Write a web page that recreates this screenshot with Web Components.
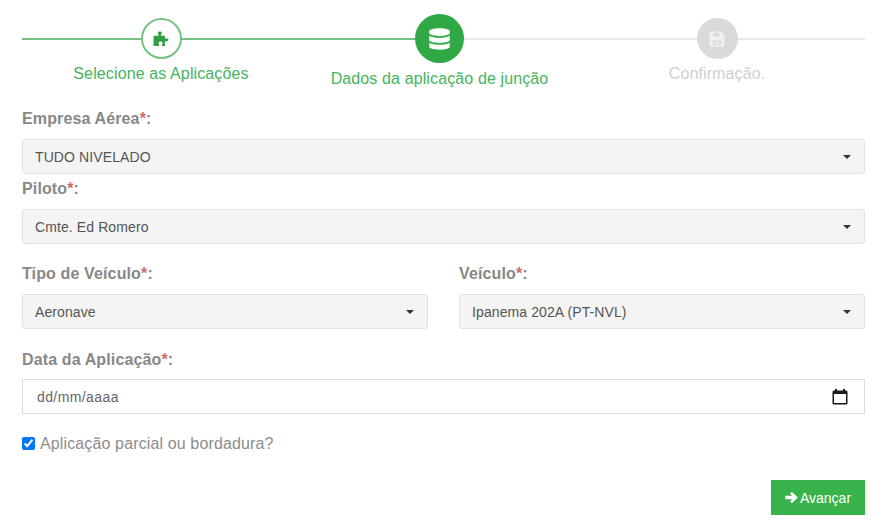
<!DOCTYPE html>
<html lang="pt">
<head>
<meta charset="utf-8">
<title>Aplicação</title>
<style>
  html, body { margin: 0; background: #fff; }
  body { font-family: "Liberation Sans", Arial, sans-serif; }
</style>
</head>
<body>
<app-form>
  <app-stepper>
    <app-step state="done" label="Selecione as Aplicações" icon="puzzle" style="width:278px"></app-step>
    <app-step state="active" label="Dados da aplicação de junção" icon="database" style="width:279px"></app-step>
    <app-step state="todo" label="Confirmação." icon="save" style="width:276px"></app-step>
  </app-stepper>
  <app-field label="Empresa Aérea" value="TUDO NIVELADO" style="margin-top:20px"></app-field>
  <app-field label="Piloto" value="Cmte. Ed Romero" style="margin-top:5px"></app-field>
  <div style="display:flex;gap:31px;margin-top:20px">
    <app-field label="Tipo de Veículo" value="Aeronave" style="flex:1"></app-field>
    <app-field label="Veículo" value="Ipanema 202A (PT-NVL)" style="flex:1"></app-field>
  </div>
  <app-field label="Data da Aplicação" kind="date" value="dd/mm/aaaa" style="margin-top:21px"></app-field>
  <app-check label="Aplicação parcial ou bordadura?" style="margin-top:20px"></app-check>
  <div style="display:flex;justify-content:flex-end;margin-top:26px">
    <app-button label="Avançar"></app-button>
  </div>
</app-form>

<script>
const ICONS = {
  puzzle: '<svg width="19" height="18" viewBox="0 0 17 17"><path fill="currentColor" d="M1 5.500h4.800V4.300C5.200 3.900 5 3.300 5 2.900 5 1.900 5.900 1.300 6.900 1.300s1.900.6 1.900 1.600c0 .4-.2 1-.8 1.400v1.200h3.700v2.900c.4-.4.900-.6 1.400-.6 1.100 0 2 .7 2 1.500s-.9 1.500-2 1.500c-.5 0-1-.2-1.400-.6V15H9v-1.600c.4-.3.600-.7.600-1.100 0-.9-.9-1.400-2-1.400s-2 .5-2 1.400c0 .4.200.8.600 1.100V15H1z"/></svg>',
  database: '<svg width="21" height="22" viewBox="0 0 448 512" preserveAspectRatio="none"><path fill="currentColor" stroke="#30a846" stroke-width="10" d="M448 73.143v45.714C448 159.143 347.667 192 224 192S0 159.143 0 118.857V73.143C0 32.857 100.333 0 224 0s224 32.857 224 73.143zM448 176v102.857C448 319.143 347.667 352 224 352S0 319.143 0 278.857V176c48.125 33.143 136.208 48.572 224 48.572S399.875 209.143 448 176zm0 160v102.857C448 479.143 347.667 512 224 512S0 479.143 0 438.857V336c48.125 33.143 136.208 48.572 224 48.572S399.875 369.143 448 336z"/></svg>',
  save: '<svg width="16" height="16" viewBox="0 0 16 16"><path fill="currentColor" fill-rule="evenodd" d="M2 .5h9.500l4 4V14a1.500 1.500 0 0 1-1.500 1.500H2A1.500 1.500 0 0 1 .5 14V2A1.500 1.500 0 0 1 2 .5zM4.500 2v3.500h6V2zM4 9.500v4.500h8V9.500zM5.500 11h5v1.500h-5z"/></svg>',
  arrow: '<svg width="13" height="13" viewBox="0 0 13 13"><path fill="currentColor" d="M6.800.7 12.900 6.500 6.800 12.300 5 10.500 7.200 8.300H.3V4.700h6.900L5 2.500z"/></svg>',
  calendar: '<svg width="16" height="16" viewBox="0 0 16 16"><path fill="#1a1a1a" fill-rule="evenodd" d="M3 0h2v1.500h6V0h2v1.500h1a1.500 1.500 0 0 1 1.500 1.500v11a1.500 1.500 0 0 1-1.500 1.500H2A1.500 1.500 0 0 1 .5 14V3A1.500 1.500 0 0 1 2 1.500h1zM2 5v9h12V5z"/></svg>'
};

class AppForm extends HTMLElement {
  constructor() {
    super();
    this.attachShadow({ mode: 'open' });
    this.shadowRoot.innerHTML = `
      <style>
        :host { display: block; box-sizing: border-box; width: 886px; height: 524px; padding: 14px 21px 0 22px; overflow: hidden; }
      </style>
      <slot></slot>`;
  }
}

class AppStepper extends HTMLElement {
  constructor() {
    super();
    this.attachShadow({ mode: 'open' });
    // line behind the circles: green up to the active step, grey after it
    this.shadowRoot.innerHTML = `
      <style>
        :host {
          display: flex;
          background:
            linear-gradient(#74c283, #74c283) 0 24px / 418px 2px no-repeat,
            linear-gradient(#e8e8e8, #e8e8e8) 0 24px / 100% 2px no-repeat;
        }
      </style>
      <slot></slot>`;
  }
}

class AppStep extends HTMLElement {
  constructor() {
    super();
    this.attachShadow({ mode: 'open' });
    this.shadowRoot.innerHTML = `
      <style>
        :host { display: flex; flex-direction: column; align-items: center; flex: none; font-size: 16px; line-height: 20px; }
        .circle { box-sizing: border-box; width: 41px; height: 41px; margin-top: 4px; border-radius: 50%; display: flex; align-items: center; justify-content: center; }
        .label { margin-top: 5px; white-space: nowrap; letter-spacing: .12px; }
        :host([state="done"]) .circle { background: #fff; border: 2px solid #74c283; color: #2f9e44; }
        :host([state="done"]) .label { color: #45b45c; }
        :host([state="active"]) .circle { width: 49px; height: 49px; margin-top: 0; background: #30a846; color: #fff; }
        :host([state="active"]) .label { color: #45b45c; margin-top: 6px; }
        :host([state="todo"]) .circle { background: #dadada; color: #f0f0f0; }
        :host([state="todo"]) .label { color: #cfcfcf; }
      </style>
      <div class="circle">${ICONS[this.getAttribute('icon')]}</div>
      <div class="label">${this.getAttribute('label')}</div>`;
  }
}

class AppField extends HTMLElement {
  constructor() {
    super();
    this.attachShadow({ mode: 'open' });
    const IS_DATE = this.getAttribute('kind') === 'date';
    this.shadowRoot.innerHTML = `
      <style>
        :host { display: block; }
        .label { font-size: 16px; font-weight: bold; line-height: 20px; color: #888; margin-bottom: 10px; letter-spacing: .13px; }
        .label b { color: #cf6a66; }
        .box {
          box-sizing: border-box; height: 35px; padding: 0 13px 0 12px; display: flex; align-items: center; justify-content: space-between;
          border: 1px solid #e2e2e2; border-radius: 3px; background: #f4f4f4; font-size: 14px; letter-spacing: .1px; color: #555;
        }
        .box.date { background: #fff; border-color: #dcdce4; border-radius: 0; padding: 0 16px 0 14px; margin-top: -1px; color: #666; letter-spacing: .4px; }
        .caret { width: 0; height: 0; border: 4px solid transparent; border-top-color: #333; border-bottom: 0; margin-right: 0; }
        svg { display: block; }
      </style>
      <div class="label">${this.getAttribute('label')}<b>*</b>:</div>
      <div class="box ${IS_DATE ? 'date' : ''}">
        <span>${this.getAttribute('value')}</span>
        ${IS_DATE ? ICONS.calendar : '<span class="caret"></span>'}
      </div>`;
  }
}

class AppCheck extends HTMLElement {
  constructor() {
    super();
    this.attachShadow({ mode: 'open' });
    this.shadowRoot.innerHTML = `
      <style>
        :host { display: flex; align-items: center; gap: 5px; font-size: 16px; line-height: 20px; letter-spacing: .13px; color: #8c8c8c; }
        input { width: 13px; height: 13px; margin: 0 0 2px; }
      </style>
      <input type="checkbox" checked>
      <span>${this.getAttribute('label')}</span>`;
  }
}

class AppButton extends HTMLElement {
  constructor() {
    super();
    this.attachShadow({ mode: 'open' });
    this.shadowRoot.innerHTML = `
      <style>
        :host { display: block; }
        .btn { box-sizing: border-box; width: 94px; height: 35px; display: flex; align-items: center; justify-content: center; gap: 2px; background: #37b34a; color: #fff; font-size: 14px; }
      </style>
      <div class="btn">${ICONS.arrow}<span>${this.getAttribute('label')}</span></div>`;
  }
}

customElements.define('app-form', AppForm);
customElements.define('app-stepper', AppStepper);
customElements.define('app-step', AppStep);
customElements.define('app-field', AppField);
customElements.define('app-check', AppCheck);
customElements.define('app-button', AppButton);
</script>
</body>
</html>
